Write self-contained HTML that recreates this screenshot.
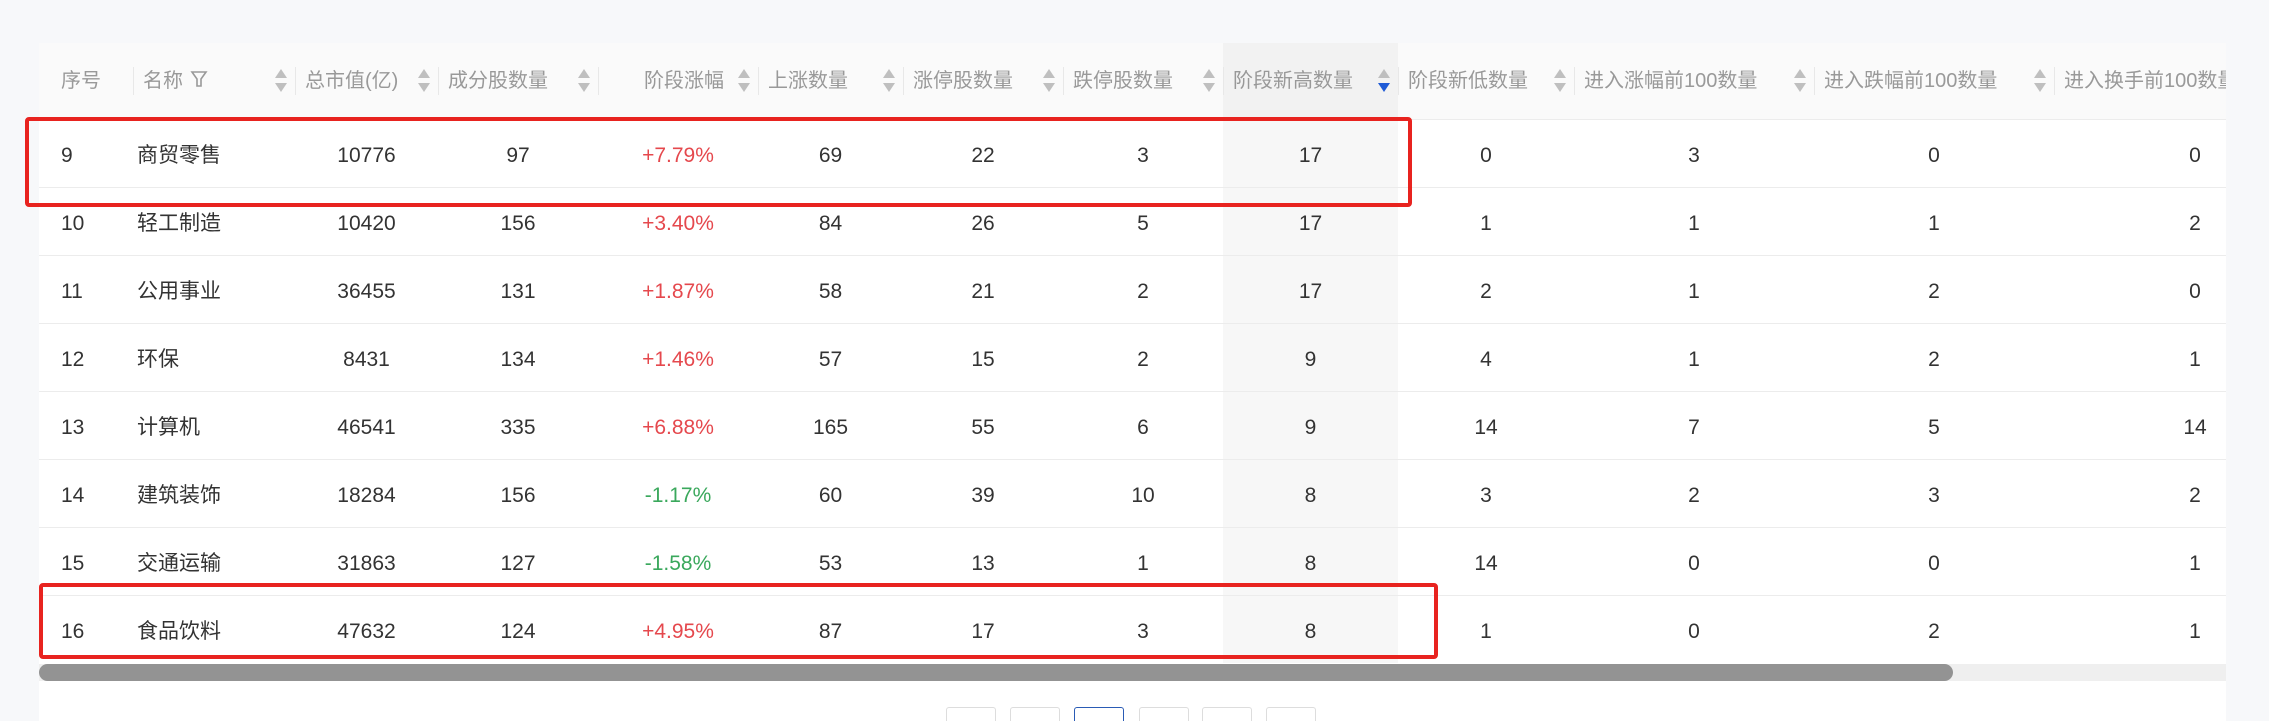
<!DOCTYPE html>
<html><head><meta charset="utf-8"><style>
*{margin:0;padding:0;box-sizing:border-box}
html{overflow:hidden;height:721px}
body{width:2269px;height:721px;background:#f7f8fa;position:relative;overflow:hidden;font-family:"Liberation Sans","Noto Sans CJK SC",sans-serif}
.wrap{position:absolute;left:39px;top:43px;width:2187px;height:678px;background:#fff;overflow:hidden}
table{border-collapse:collapse;table-layout:fixed;width:2257px}
th{height:76px;background:#fafafa;color:#999;font-weight:normal;font-size:20px;line-height:26px;text-align:left;padding-left:10px;position:relative;white-space:nowrap;overflow:hidden}
th .d{position:absolute;left:0;top:24px;width:1px;height:28px;background:#e8e8e8}
th .s{position:absolute;right:6px;top:23px;width:16px;height:30px}
th.act{background:#f2f2f2}
td{height:68px;border-top:1px solid #ececec;font-size:21px;line-height:26px;padding-top:6px;color:#333;text-align:center;white-space:nowrap;vertical-align:middle}
td.l{text-align:left;padding-left:4px}
td.hl{background:#f7f7f7}
.r{color:#e5484d}.g{color:#3aa85c}
.box{position:absolute;border:4px solid #e8231f;border-radius:4px}
.sb{position:absolute;left:39px;top:664px;width:2187px;height:17px;background:#efefef}
.sb i{position:absolute;left:0;top:0;width:1914px;height:17px;background:#939393;border-radius:9px}
.pg{position:absolute;top:707px;width:50px;height:14px;border:1px solid #ddd;border-bottom:none;border-radius:3px 3px 0 0;background:#fff}
</style></head><body>
<div class="wrap">
<table>
<colgroup><col style="width:94px"><col style="width:162px"><col style="width:143px"><col style="width:160px"><col style="width:160px"><col style="width:145px"><col style="width:160px"><col style="width:160px"><col style="width:175px"><col style="width:176px"><col style="width:240px"><col style="width:240px"><col style="width:282px"></colgroup>
<tr>
<th style="padding-left:22px">序号</th>
<th><span class="d"></span>名称 <svg width="20" height="20" viewBox="0 0 20 20" style="vertical-align:-2px"><path d="M3 3h14l-5 7v7h-4v-7z" fill="none" stroke="#999" stroke-width="1.6"/></svg><svg class="s" viewBox="0 0 16 30"><path d="M8 3l6 9H2z" fill="#bfbfbf"/><path d="M2 17h12l-6 9z" fill="#bfbfbf"/></svg></th>
<th><span class="d"></span>总市值(亿)<svg class="s" viewBox="0 0 16 30"><path d="M8 3l6 9H2z" fill="#bfbfbf"/><path d="M2 17h12l-6 9z" fill="#bfbfbf"/></svg></th>
<th><span class="d"></span>成分股数量<svg class="s" viewBox="0 0 16 30"><path d="M8 3l6 9H2z" fill="#bfbfbf"/><path d="M2 17h12l-6 9z" fill="#bfbfbf"/></svg></th>
<th style="padding-left:46px"><span class="d"></span>阶段涨幅<svg class="s" viewBox="0 0 16 30"><path d="M8 3l6 9H2z" fill="#bfbfbf"/><path d="M2 17h12l-6 9z" fill="#bfbfbf"/></svg></th>
<th><span class="d"></span>上涨数量<svg class="s" viewBox="0 0 16 30"><path d="M8 3l6 9H2z" fill="#bfbfbf"/><path d="M2 17h12l-6 9z" fill="#bfbfbf"/></svg></th>
<th><span class="d"></span>涨停股数量<svg class="s" viewBox="0 0 16 30"><path d="M8 3l6 9H2z" fill="#bfbfbf"/><path d="M2 17h12l-6 9z" fill="#bfbfbf"/></svg></th>
<th><span class="d"></span>跌停股数量<svg class="s" viewBox="0 0 16 30"><path d="M8 3l6 9H2z" fill="#bfbfbf"/><path d="M2 17h12l-6 9z" fill="#bfbfbf"/></svg></th>
<th class="act"><span class="d"></span>阶段新高数量<svg class="s" viewBox="0 0 16 30"><path d="M8 3l6 9H2z" fill="#bfbfbf"/><path d="M2 17h12l-6 9z" fill="#1f5bd6"/></svg></th>
<th><span class="d"></span>阶段新低数量<svg class="s" viewBox="0 0 16 30"><path d="M8 3l6 9H2z" fill="#bfbfbf"/><path d="M2 17h12l-6 9z" fill="#bfbfbf"/></svg></th>
<th><span class="d"></span>进入涨幅前100数量<svg class="s" viewBox="0 0 16 30"><path d="M8 3l6 9H2z" fill="#bfbfbf"/><path d="M2 17h12l-6 9z" fill="#bfbfbf"/></svg></th>
<th><span class="d"></span>进入跌幅前100数量<svg class="s" viewBox="0 0 16 30"><path d="M8 3l6 9H2z" fill="#bfbfbf"/><path d="M2 17h12l-6 9z" fill="#bfbfbf"/></svg></th>
<th><span class="d"></span>进入换手前100数量</th>
</tr>
<tr><td class="l" style="padding-left:22px">9</td><td class="l">商贸零售</td><td>10776</td><td>97</td><td class="r">+7.79%</td><td>69</td><td>22</td><td>3</td><td class="hl">17</td><td>0</td><td>3</td><td>0</td><td>0</td></tr>
<tr><td class="l" style="padding-left:22px">10</td><td class="l">轻工制造</td><td>10420</td><td>156</td><td class="r">+3.40%</td><td>84</td><td>26</td><td>5</td><td class="hl">17</td><td>1</td><td>1</td><td>1</td><td>2</td></tr>
<tr><td class="l" style="padding-left:22px">11</td><td class="l">公用事业</td><td>36455</td><td>131</td><td class="r">+1.87%</td><td>58</td><td>21</td><td>2</td><td class="hl">17</td><td>2</td><td>1</td><td>2</td><td>0</td></tr>
<tr><td class="l" style="padding-left:22px">12</td><td class="l">环保</td><td>8431</td><td>134</td><td class="r">+1.46%</td><td>57</td><td>15</td><td>2</td><td class="hl">9</td><td>4</td><td>1</td><td>2</td><td>1</td></tr>
<tr><td class="l" style="padding-left:22px">13</td><td class="l">计算机</td><td>46541</td><td>335</td><td class="r">+6.88%</td><td>165</td><td>55</td><td>6</td><td class="hl">9</td><td>14</td><td>7</td><td>5</td><td>14</td></tr>
<tr><td class="l" style="padding-left:22px">14</td><td class="l">建筑装饰</td><td>18284</td><td>156</td><td class="g">-1.17%</td><td>60</td><td>39</td><td>10</td><td class="hl">8</td><td>3</td><td>2</td><td>3</td><td>2</td></tr>
<tr><td class="l" style="padding-left:22px">15</td><td class="l">交通运输</td><td>31863</td><td>127</td><td class="g">-1.58%</td><td>53</td><td>13</td><td>1</td><td class="hl">8</td><td>14</td><td>0</td><td>0</td><td>1</td></tr>
<tr><td class="l" style="padding-left:22px">16</td><td class="l">食品饮料</td><td>47632</td><td>124</td><td class="r">+4.95%</td><td>87</td><td>17</td><td>3</td><td class="hl">8</td><td>1</td><td>0</td><td>2</td><td>1</td></tr>
</table>
</div>
<div class="sb"><i></i></div>
<div class="pg" style="left:946px"></div>
<div class="pg" style="left:1010px"></div>
<div class="pg" style="left:1074px;border-color:#2a5bb5"></div>
<div class="pg" style="left:1139px"></div>
<div class="pg" style="left:1202px"></div>
<div class="pg" style="left:1266px"></div>
<div class="box" style="left:25px;top:117px;width:1387px;height:90px"></div>
<div class="box" style="left:39px;top:583px;width:1399px;height:76px"></div>
</body></html>
